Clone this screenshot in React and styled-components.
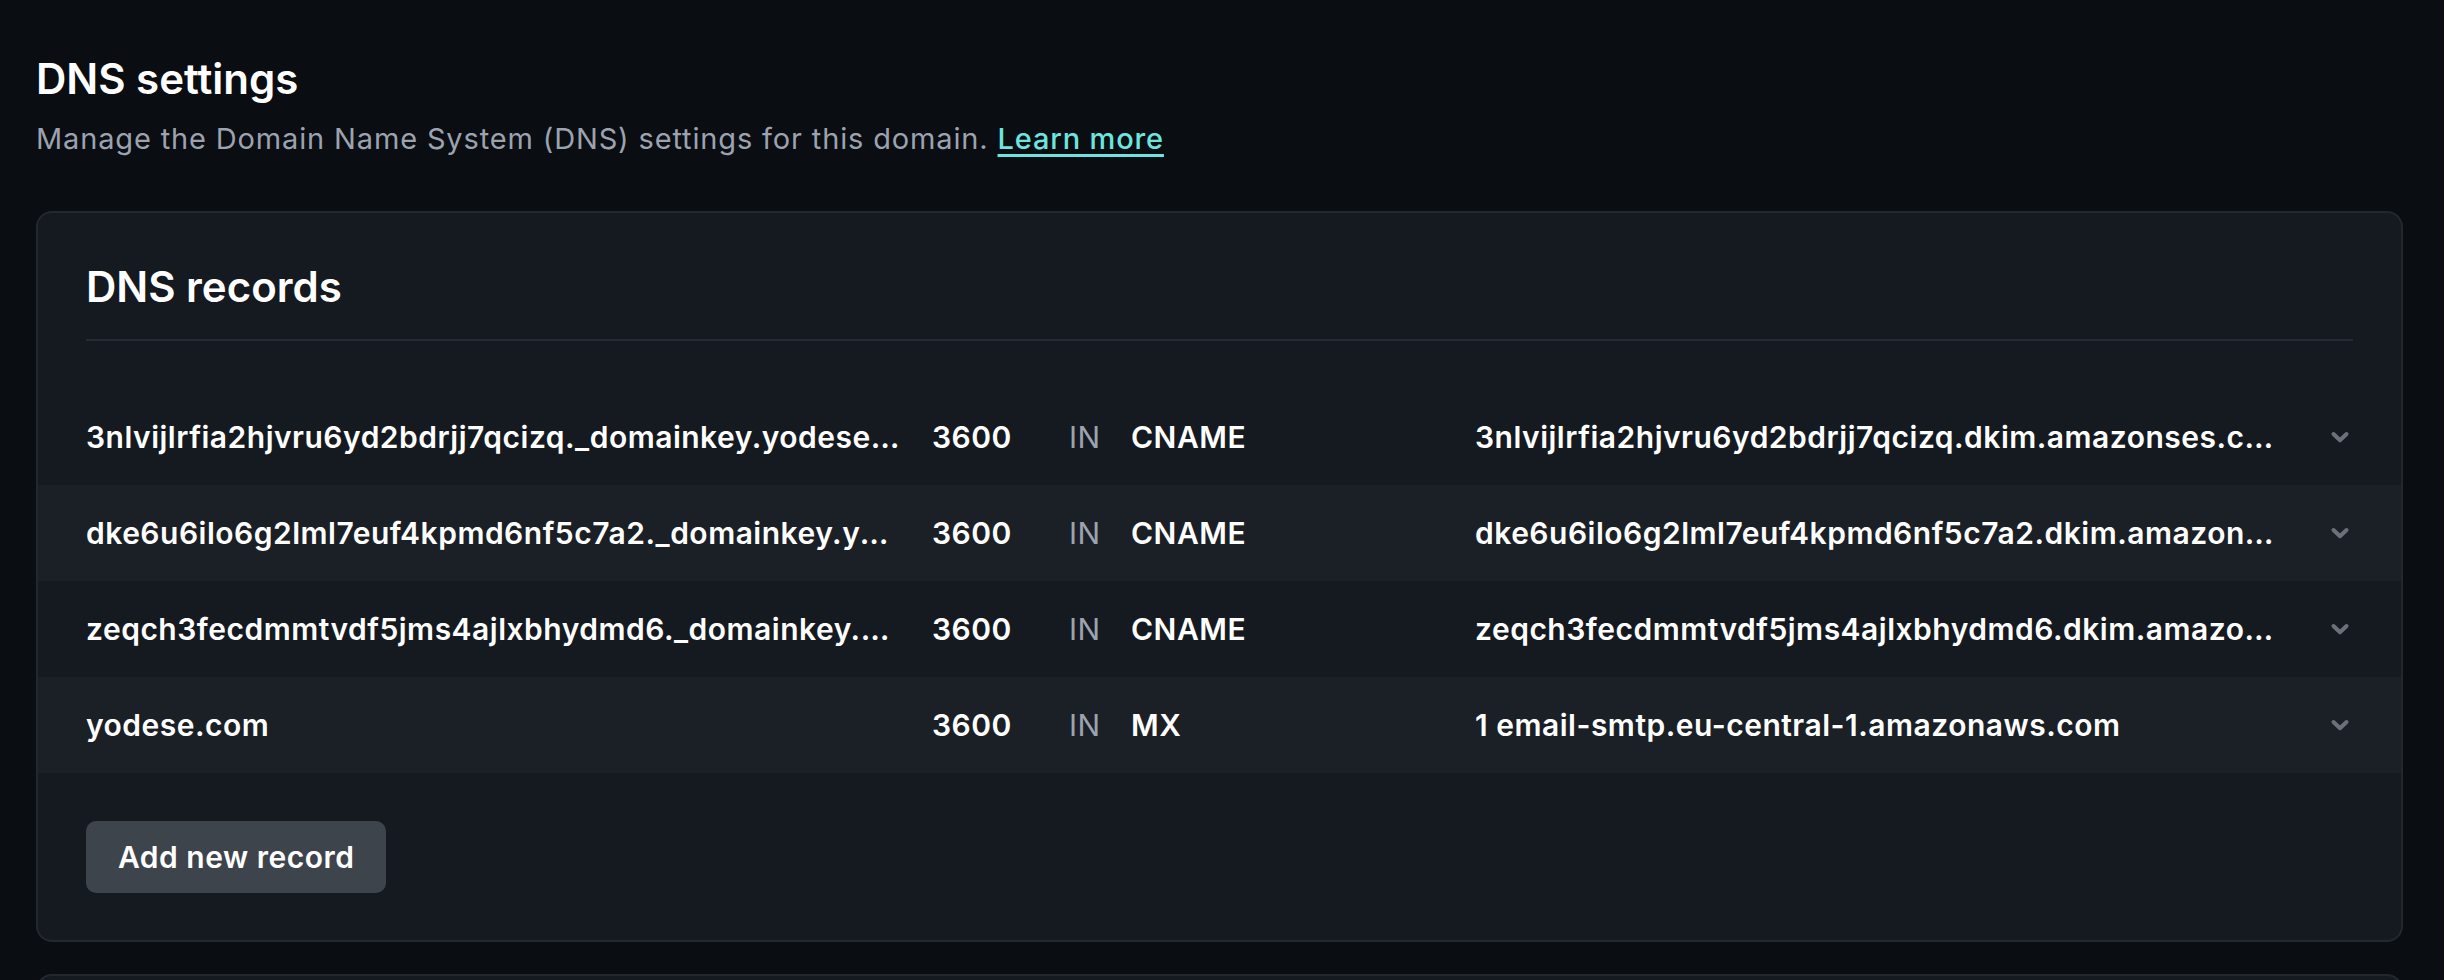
import React from "react";
import styled, { createGlobalStyle } from "styled-components";

const GlobalStyle = createGlobalStyle`
  html, body {
    margin: 0;
    padding: 0;
    background: #0a0d12;
  }
  body {
    font-family: Inter, "Noto Sans", "Liberation Sans", sans-serif;
    color: #ffffff;
    -webkit-font-smoothing: antialiased;
  }
`;

const Page = styled.main`
  padding: 51px 41px 0 36px;
  display: flex;
  flex-direction: column;
`;

const Header = styled.header`
  display: flex;
  flex-direction: column;
  gap: 12px;
  margin-bottom: 52px;
`;

const Title = styled.h1`
  margin: 0;
  font-size: 42px;
  line-height: 56px;
  font-weight: 600;
  color: #ffffff;
`;

const Subtitle = styled.p`
  margin: 0;
  font-size: 29px;
  line-height: 40px;
  font-weight: 400;
  letter-spacing: 0.85px;
  color: #9ca3af;
`;

const Link = styled.a`
  color: #6ee4df;
  font-weight: 500;
  text-decoration: underline;
  text-decoration-thickness: 3px;
  text-underline-offset: 5px;
  cursor: pointer;
`;

const Card = styled.section`
  background: #151920;
  border: 2px solid #232830;
  border-radius: 16px;
  display: flex;
  flex-direction: column;
  padding: 46px 0 47px;
  margin-bottom: 32px;
  min-height: ${(p) => p.$minHeight || "auto"};
`;

const CardHeader = styled.div`
  margin: 0 48px 48px;
  padding-bottom: 24px;
  border-bottom: 2px solid #262b33;
`;

const CardTitle = styled.h2`
  margin: 0;
  font-size: 42px;
  line-height: 56px;
  font-weight: 600;
  color: #ffffff;
`;

const Rows = styled.div`
  display: flex;
  flex-direction: column;
`;

const Row = styled.div`
  display: grid;
  grid-template-columns: 814px 105px 30px 312px minmax(0, 1fr) 32px;
  column-gap: 32px;
  align-items: center;
  height: 96px;
  padding: 0 48px;
  background: ${(p) => (p.$alt ? "#1b1f26" : "transparent")};
`;

const Cell = styled.div`
  font-size: 30px;
  line-height: 40px;
  letter-spacing: 0.5px;
  color: ${(p) => (p.$muted ? "#9ca3af" : "#ffffff")};
  font-weight: ${(p) => (p.$muted ? 400 : 600)};
  white-space: nowrap;
  overflow: ${(p) => (p.$muted ? "visible" : "hidden")};
  text-overflow: ellipsis;
`;

const ChevronWrap = styled.div`
  display: flex;
  align-items: center;
  justify-content: flex-end;
  color: #6c7179;
`;

const Footer = styled.div`
  padding: 48px 48px 0;
  display: flex;
`;

const Button = styled.button`
  font-family: inherit;
  font-size: 30px;
  line-height: 40px;
  font-weight: 600;
  letter-spacing: 0.5px;
  color: #ffffff;
  background: #3e444c;
  border: none;
  border-radius: 10px;
  height: 72px;
  padding: 0 32px;
  cursor: pointer;
`;

const Chevron = () => (
  <svg width="24" height="24" viewBox="0 0 24 24" fill="none" aria-hidden="true">
    <path
      d="M4.5 9 L11 15.2 L17.5 9"
      stroke="currentColor"
      strokeWidth="4"
      strokeLinecap="round"
      strokeLinejoin="round"
    />
  </svg>
);

const records = [
  {
    name: "3nlvijlrfia2hjvru6yd2bdrjj7qcizq._domainkey.yodese.com",
    ttl: "3600",
    cls: "IN",
    type: "CNAME",
    value: "3nlvijlrfia2hjvru6yd2bdrjj7qcizq.dkim.amazonses.com",
  },
  {
    name: "dke6u6ilo6g2lml7euf4kpmd6nf5c7a2._domainkey.yodese.com",
    ttl: "3600",
    cls: "IN",
    type: "CNAME",
    value: "dke6u6ilo6g2lml7euf4kpmd6nf5c7a2.dkim.amazonses.com",
  },
  {
    name: "zeqch3fecdmmtvdf5jms4ajlxbhydmd6._domainkey.yodese.com",
    ttl: "3600",
    cls: "IN",
    type: "CNAME",
    value: "zeqch3fecdmmtvdf5jms4ajlxbhydmd6.dkim.amazonses.com",
  },
  {
    name: "yodese.com",
    ttl: "3600",
    cls: "IN",
    type: "MX",
    value: "1 email-smtp.eu-central-1.amazonaws.com",
  },
];

export default function App() {
  return (
    <>
      <GlobalStyle />
      <Page>
        <Header>
          <Title>DNS settings</Title>
          <Subtitle>
            Manage the Domain Name System (DNS) settings for this domain.{" "}
            <Link>Learn more</Link>
          </Subtitle>
        </Header>
        <Card>
          <CardHeader>
            <CardTitle>DNS records</CardTitle>
          </CardHeader>
          <Rows>
            {records.map((r, i) => (
              <Row key={r.name} $alt={i % 2 === 1}>
                <Cell>{r.name}</Cell>
                <Cell>{r.ttl}</Cell>
                <Cell $muted>{r.cls}</Cell>
                <Cell>{r.type}</Cell>
                <Cell>{r.value}</Cell>
                <ChevronWrap>
                  <Chevron />
                </ChevronWrap>
              </Row>
            ))}
          </Rows>
          <Footer>
            <Button>Add new record</Button>
          </Footer>
        </Card>
        <Card $minHeight="300px" />
      </Page>
    </>
  );
}
